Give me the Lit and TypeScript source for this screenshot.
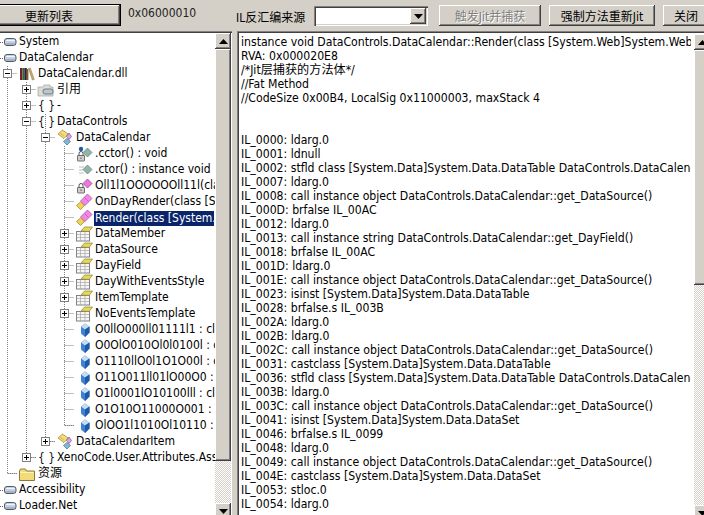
import { LitElement, html, css, svg } from "lit";
import { customElement } from "lit/decorators.js";

type Row = { l: number; e?: "+" | "-"; i: string; t: string; sel?: boolean };

const rows: Row[] = [
  { l: 0, i: "asm", t: "System" },
  { l: 0, i: "asm", t: "DataCalendar" },
  { l: 1, e: "-", i: "lib", t: "DataCalendar.dll" },
  { l: 2, e: "+", i: "ref", t: "引用" },
  { l: 2, e: "+", i: "ns", t: "-" },
  { l: 2, e: "-", i: "ns", t: "DataControls" },
  { l: 3, e: "-", i: "cls", t: "DataCalendar" },
  { l: 4, i: "cctor", t: ".cctor() : void" },
  { l: 4, i: "ctor", t: ".ctor() : instance void" },
  { l: 4, i: "lockm", t: "Oll1l1OOOOOOll11l(class" },
  { l: 4, i: "evm", t: "OnDayRender(class [System" },
  { l: 4, i: "evm", t: "Render(class [System.Web]", sel: true },
  { l: 4, e: "+", i: "prop", t: "DataMember" },
  { l: 4, e: "+", i: "prop", t: "DataSource" },
  { l: 4, e: "+", i: "prop", t: "DayField" },
  { l: 4, e: "+", i: "prop", t: "DayWithEventsStyle" },
  { l: 4, e: "+", i: "prop", t: "ItemTemplate" },
  { l: 4, e: "+", i: "prop", t: "NoEventsTemplate" },
  { l: 4, i: "fld", t: "O0llO000ll01111l1 : class" },
  { l: 4, i: "fld", t: "O0OlO010Ol0l0100l : class" },
  { l: 4, i: "fld", t: "O1110llO0l1O1O00l : class" },
  { l: 4, i: "fld", t: "O11O011ll01lO00O0 : class" },
  { l: 4, i: "fld", t: "O1l0001lO10100lll : class" },
  { l: 4, i: "fld", t: "O1O10O11000O001 : class" },
  { l: 4, i: "fld", t: "OlOO1l1010Ol10110 : class" },
  { l: 3, e: "+", i: "cls", t: "DataCalendarItem" },
  { l: 2, e: "+", i: "ns", t: "XenoCode.User.Attributes.Assembly" },
  { l: 1, i: "folder", t: "资源" },
  { l: 0, i: "asm", t: "Accessibility" },
  { l: 0, i: "asm", t: "Loader.Net" },
];

const code = [
  "instance void DataControls.DataCalendar::Render(class [System.Web]System.Web.UI.HtmlTextWriter)",
  "RVA: 0x000020E8",
  "/*Jit层捕获的方法体*/",
  "//Fat Method",
  "//CodeSize 0x00B4, LocalSig 0x11000003, maxStack 4",
  "",
  "",
  "IL_0000: ldarg.0",
  "IL_0001: ldnull",
  "IL_0002: stfld class [System.Data]System.Data.DataTable DataControls.DataCalendar::dataTable",
  "IL_0007: ldarg.0",
  "IL_0008: call instance object DataControls.DataCalendar::get_DataSource()",
  "IL_000D: brfalse IL_00AC",
  "IL_0012: ldarg.0",
  "IL_0013: call instance string DataControls.DataCalendar::get_DayField()",
  "IL_0018: brfalse IL_00AC",
  "IL_001D: ldarg.0",
  "IL_001E: call instance object DataControls.DataCalendar::get_DataSource()",
  "IL_0023: isinst [System.Data]System.Data.DataTable",
  "IL_0028: brfalse.s IL_003B",
  "IL_002A: ldarg.0",
  "IL_002B: ldarg.0",
  "IL_002C: call instance object DataControls.DataCalendar::get_DataSource()",
  "IL_0031: castclass [System.Data]System.Data.DataTable",
  "IL_0036: stfld class [System.Data]System.Data.DataTable DataControls.DataCalendar::dataTable",
  "IL_003B: ldarg.0",
  "IL_003C: call instance object DataControls.DataCalendar::get_DataSource()",
  "IL_0041: isinst [System.Data]System.Data.DataSet",
  "IL_0046: brfalse.s IL_0099",
  "IL_0048: ldarg.0",
  "IL_0049: call instance object DataControls.DataCalendar::get_DataSource()",
  "IL_004E: castclass [System.Data]System.Data.DataSet",
  "IL_0053: stloc.0",
  "IL_0054: ldarg.0",
];

const lockIcon = svg`<rect x="1.500" y="9.500" width="7" height="5.500" rx=".5" fill="#d0d0c8" stroke="#505050" stroke-width=".8"/><path d="M3 9.500V7.500a2 2 0 0 1 4 0v2" fill="none" stroke="#505050"/><path d="M5 11.500v1.500" stroke="#505050"/>`;

function icon(k: string) {
  switch (k) {
    case "asm":
      return svg`<path d="M0 8.500h4" stroke="#606060" stroke-dasharray="1 1"/><rect x="4.500" y="4.500" width="11.500" height="7" rx="2.500" fill="#c6d2df" stroke="#4e5a68"/><path d="M6 6.500h9" stroke="#f0f5fa"/><path d="M6 10h9" stroke="#8795a6"/>`;
    case "lib":
      return svg`<rect x="1" y="2" width="2.400" height="12" fill="#7a1f1f"/><rect x="3.400" y="2" width="2" height="12" fill="#2f6a35"/><rect x="5.400" y="2" width="2.400" height="12" fill="#23233f"/><rect x="7.800" y="3" width="1.600" height="11" fill="#8a5a20"/><path d="M9.500 2.500l1.800-.5 4 11.500-2 .5z" fill="#c8a868" stroke="#8d7a48" stroke-width=".5"/>`;
    case "ref":
      return svg`<path d="M0 5h5l1-2h6v2h3v9H0z" fill="#dcdcd4" stroke="#a8a8a0" stroke-width=".8"/><rect x="5" y="7" width="10" height="5" rx="2" fill="#b8c6d6" stroke="#5a6470" stroke-width=".8"/>`;
    case "cls":
      return svg`<path d="M5.500 0l5.500 4-4 4.500-6-4.500z" fill="#f2dc78" stroke="#a89030" stroke-width=".8"/><path d="M3.500 3.500l3 2" stroke="#a89030" stroke-width=".6"/><path d="M12 3l2.500 3.500-2.500 3-2.500-3z" fill="#d6a8dc" stroke="#80508c" stroke-width=".7"/><path d="M10 8.500l3.500 3-3.500 3.500-3.500-3.500z" fill="#86b6d2" stroke="#3a6e8e" stroke-width=".7"/>`;
    case "cctor":
      return svg`${lockIcon}<circle cx="5" cy="3" r="2.200" fill="#1f5fa8"/><path d="M11.500 2l4.500 4.500-4.500 4.500L7 6.500z" fill="#92b4a8" stroke="#5f7f75" stroke-width=".7"/>`;
    case "ctor":
      return svg`<path d="M3 5h5M3 8h4M3 11h5" stroke="#b8c0c0"/><path d="M11.500 3l4.500 4.500-4.500 4.500L7 7.500z" fill="#92b4a8" stroke="#5f7f75" stroke-width=".7"/>`;
    case "lockm":
      return svg`${lockIcon}<path d="M11.500 1l4.500 4.500-4.500 4.500L7 5.500z" fill="#e878dc" stroke="#983098" stroke-width=".7"/>`;
    case "evm":
      return svg`<path d="M11.500 0l4.500 4.500-7 7L4.500 7z" fill="#f088e4" stroke="#a848a8" stroke-width=".7"/><path d="M8.500 3.500l4 4" stroke="#a848a8" stroke-width=".6"/><path d="M4.500 8l4 3.500-4 4-4-4z" fill="#f2d250" stroke="#988020" stroke-width=".7"/>`;
    case "prop":
      return svg`<rect x="0.500" y="5.500" width="13" height="9.500" fill="#f6f6f6" stroke="#808080"/><path d="M.5 8.500h13M.5 11.500h13M4.500 5.500v9.500M9 5.500v9.500" stroke="#a8a8a8" stroke-width=".7"/><path d="M5 5l3.500-4h8L13 5.500z" fill="#e8d65c" stroke="#8d8030" stroke-width=".7"/>`;
    case "fld":
      return svg`<path d="M9 1.500l4.500 3v6L9 15l-4-3.500v-7z" fill="#3f82d2"/><path d="M9 1.500l4.500 3-4.500 3-4-3z" fill="#c4dcf2"/><path d="M9 7.500V15l4.500-4.500v-6z" fill="#1f5aa6"/>`;
    case "folder":
      return svg`<path d="M.5 5l1-2h5l1 2h8v9.500H.5z" fill="#f2dc7a" stroke="#8c7a38"/><path d="M1.500 6.500h13" stroke="#fff4b8"/>`;
  }
  return svg``;
}

const guides = svg`
  <path d="M7.500 32V439.500H18M26.500 48V423.500H37M45.500 80V407.500H56M64.500 112V391.500H75" />
  ${rows.map((r, i) => {
    if (r.l === 0) return svg``;
    const x = 19 * r.l - 12 + 0.5;
    return svg`<path d="M${x} ${i * 16 + 7.5}h10"/>`;
  })}
`;

const arrow = (up: boolean) =>
  html`<svg width="9" height="5" viewBox="0 0 9 5"><path d="${up ? "M4.500 0L9 5H0z" : "M0 0h9L4.500 5z"}" fill="#000"/></svg>`;

@customElement("app-root")
export class AppRoot extends LitElement {
  static styles = css`
    :host {
      display: block;
      width: 704px;
      height: 515px;
      overflow: hidden;
      background: #d4d0c8;
      font-family: "DejaVu Sans Condensed", "DejaVu Sans", "Noto Sans CJK SC", sans-serif;
      font-size: 12px;
      color: #000;
    }
    .toolbar { display: flex; align-items: flex-start; height: 31px; width: 740px; padding-top: 4px; box-sizing: border-box; margin-left: -23px; }
    .toolbar > * { flex: none; }
    .btn {
      height: 22px; display: flex; align-items: center; justify-content: center; box-sizing: border-box;
      background: #d4d0c8; font-size: 12px;
      box-shadow: inset -1px -1px #404040, inset 1px 1px #fff, inset -2px -2px #808080;
    }
    .def { width: 144px; outline: 1px solid #000; outline-offset: -1px; box-shadow: inset -2px -2px #404040, inset 2px 2px #fff, inset -3px -3px #808080; }
    .hex { width: 108px; margin-left: 7px; margin-top: 2px; font-size: 12px; color: #222; }
    .lbl { width: 78px; margin-top: 4px; }
    .sel {
      width: 114px; height: 20px; margin-top: 2px; background: #fff; box-sizing: border-box; display: flex; justify-content: flex-end; padding: 2px;
      box-shadow: inset 1px 1px #808080, inset 2px 2px #404040, inset -1px -1px #fff, inset -2px -2px #d4d0c8;
    }
    .drop { width: 16px; display: flex; align-items: center; justify-content: center; background: #d4d0c8;
      box-shadow: inset -1px -1px #404040, inset 1px 1px #fff, inset -2px -2px #808080; }
    .b1 { width: 102px; margin-left: 11px; margin-top: 1px; height: 21px; color: #808080; text-shadow: 1px 1px #fff; }
    .b2 { width: 106px; margin-left: 8px; margin-top: 1px; height: 21px; }
    .b3 { width: 46px; margin-left: 8px; margin-top: 1px; height: 21px; }
    .main { display: flex; align-items: flex-start; width: 711px; }
    .pane {
      display: flex; flex: none; box-sizing: border-box; background: #fff; overflow: hidden;
      box-shadow: inset 0 1px #808080, inset 0 2px #404040;
    }
    .tree { width: 232px; height: 488px; padding: 2px 1px 0 0; margin-right: 5px; }
    .treebody { width: 215px; flex: none; padding-top: 1px; position: relative; isolation: isolate; overflow: hidden; }
    .guides { position: absolute; left: 0; top: 1px; z-index: -1; fill: none; stroke: #808080; stroke-dasharray: 1 1; }
    .row { height: 16px; display: flex; align-items: center; position: relative; white-space: nowrap; }
    .exp { position: absolute; top: 3px; width: 9px; height: 9px; display: block; }
    .ico { flex: none; width: 16px; height: 16px; overflow: visible; display: block; }
    .ns { flex: none; width: 16px; text-align: center; font-size: 12px; color: #111; }
    .txt { margin-left: 2px; padding: 0 1px 1px 1px; height: 15px; line-height: 15px; flex: none; }
    .row.on .txt { background: #0a246a; color: #fff; width: 120px; overflow: hidden; box-sizing: border-box; }
    .code { width: 474px; height: 490px; padding: 3px 0 0 0; box-shadow: inset 1px 1px #808080, inset 2px 2px #404040; }
    .lines { width: 450px; flex: none; margin: 0 2px 0 4px; padding-top: 1px; overflow: hidden; white-space: pre; line-height: 14px; font-size: 12.15px; }
    .code .sb { margin-left: 1px; }
    .ln { height: 14px; }
    .sb { width: 16px; flex: none; display: flex; flex-direction: column;
      background-image: conic-gradient(#d4d0c8 25%, #fff 0 50%, #d4d0c8 0 75%, #fff 0); background-size: 2px 2px; }
    .ar, .thumb { flex: none; background: #d4d0c8; box-sizing: border-box;
      box-shadow: inset -1px -1px #404040, inset 1px 1px #fff, inset -2px -2px #808080; }
    .ar { height: 16px; display: flex; align-items: center; justify-content: center; }
    .fill { flex: 1; }
    .t1 { height: 412px; }
    .t2 { height: 235px; }
  `;

  render() {
    return html`
      <div class="toolbar">
        <div class="btn def">更新列表</div>
        <div class="hex">0x06000010</div>
        <div class="lbl">IL反汇编来源</div>
        <div class="sel"><div class="drop">${arrow(false)}</div></div>
        <div class="btn b1">触发Jit并捕获</div>
        <div class="btn b2">强制方法重新Jit</div>
        <div class="btn b3">关闭</div>
      </div>
      <div class="main">
        <div class="pane tree">
          <div class="treebody">
            <svg class="guides" width="215" height="480">${guides}</svg>
            ${rows.map(
              (r) => html`<div class="row ${r.sel ? "on" : ""}" style="padding-left:${19 * r.l}px">
                ${r.e
                  ? html`<svg class="exp" style="left:${19 * r.l - 16}px" viewBox="0 0 9 9">
                      <rect x=".5" y=".5" width="8" height="8" fill="#fff" stroke="#808080" />
                      <path d="${r.e === "+" ? "M2 4.500h5M4.500 2v5" : "M2 4.500h5"}" stroke="#000" />
                    </svg>`
                  : ""}
                ${r.i === "ns"
                  ? html`<span class="ns">{ }</span>`
                  : html`<svg class="ico" viewBox="0 0 16 16">${icon(r.i)}</svg>`}
                <span class="txt">${r.t}</span>
              </div>`
            )}
          </div>
          <div class="sb">
            <div class="ar">${arrow(true)}</div>
            <div class="thumb t1"></div>
            <div class="fill"></div>
            <div class="ar">${arrow(false)}</div>
          </div>
        </div>
        <div class="pane code">
          <div class="lines">${code.map((l) => html`<div class="ln">${l}</div>`)}</div>
          <div class="sb">
            <div class="ar">${arrow(true)}</div>
            <div class="thumb t2"></div>
            <div class="fill"></div>
            <div class="ar">${arrow(false)}</div>
          </div>
        </div>
      </div>
    `;
  }
}
